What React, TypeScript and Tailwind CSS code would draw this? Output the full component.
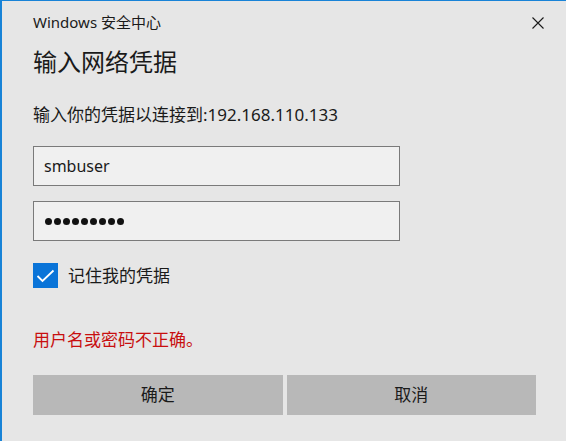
import { X } from 'lucide-react';

const font = "font-['Noto_Sans','Noto_Sans_CJK_SC',sans-serif]";

export default function App() {
  return (
    <div
      className={`w-[566px] h-[441px] bg-[#e6e6e6] border-t border-l-2 border-[#1883d7] pl-[31px] text-[#1a1a1a] overflow-hidden ${font}`}
    >
      {/* title bar */}
      <div className="mt-[7px] h-[28px] flex items-center justify-between pr-[22px]">
        <span className="text-[15px] leading-[28px]">Windows 安全中心</span>
        <svg width="12" height="12" viewBox="0 0 12 12" className="mt-[2px]">
          <path d="M0.5 0.5 L11.5 11.5 M11.5 0.5 L0.5 11.5" stroke="#1a1a1a" strokeWidth="1.1" fill="none" />
        </svg>
      </div>

      <h1 className="mt-[10px] text-[24px] leading-[32px] font-normal">输入网络凭据</h1>

      <p className="mt-[25px] text-[17px] leading-[24px]">输入你的凭据以连接到:192.168.110.133</p>

      <div className="mt-[19px] w-[367px] h-[40px] border border-[#7a7a7a] bg-[#f0f0f0] flex items-center pl-[10px] text-[16px]">
        smbuser
      </div>

      <div className="mt-[15px] w-[367px] h-[40px] border border-[#7a7a7a] bg-[#f0f0f0] flex items-center pl-[11px] gap-[2px]">
        {Array.from({ length: 9 }).map((_, i) => (
          <span key={i} className="w-[7px] h-[7px] rounded-full bg-[#111111]" />
        ))}
      </div>

      <label className="mt-[22px] h-[25px] flex items-center gap-[10px]">
        <span className="w-[25px] h-[25px] bg-[#0a74d8] flex items-center justify-center">
          <svg width="19" height="14" viewBox="0 0 19 14">
            <path d="M1.5 7 L6.5 12 L17.5 1.5" stroke="#ffffff" strokeWidth="1.8" fill="none" />
          </svg>
        </span>
        <span className="text-[17px] leading-[24px]">记住我的凭据</span>
      </label>

      <p className="mt-[40px] text-[17px] leading-[24px] text-[#c80f0f]">用户名或密码不正确。</p>

      <div className="mt-[23px] w-[503px] grid grid-cols-2 gap-[4px]">
        <button className="h-[40px] bg-[#b8b8b8] text-[17px]">确定</button>
        <button className="h-[40px] bg-[#b8b8b8] text-[17px]">取消</button>
      </div>
    </div>
  );
}
